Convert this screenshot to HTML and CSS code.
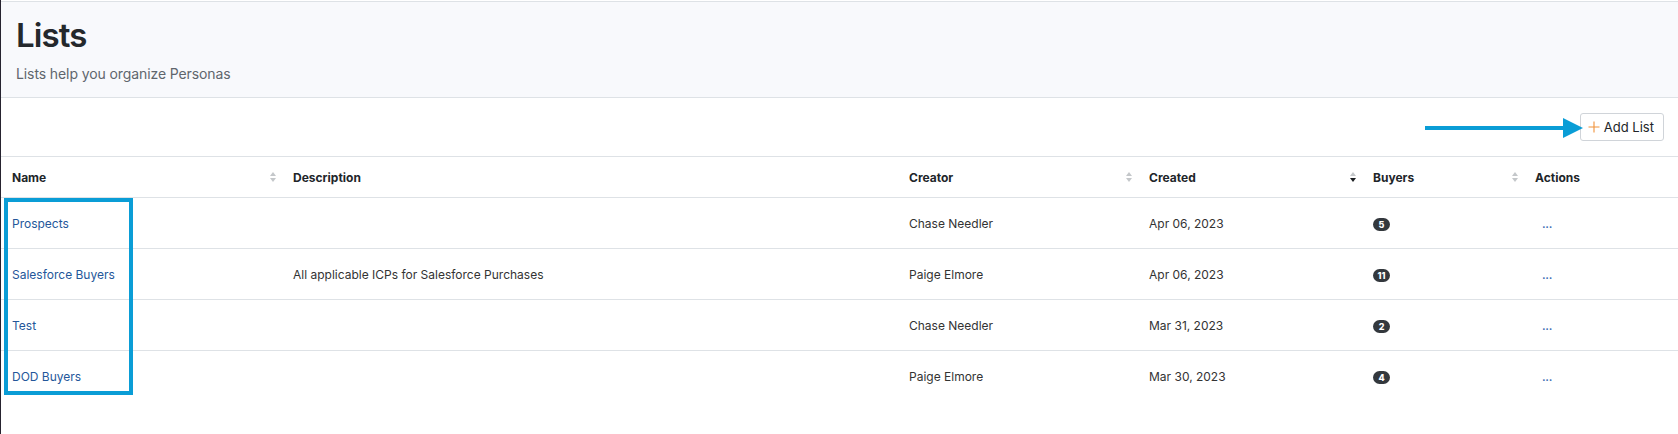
FILE: index.html
```html
<!DOCTYPE html>
<html lang="en">
<head>
    <meta charset="UTF-8">
    <meta name="viewport" content="width=device-width, initial-scale=1.0">
    <title>Lists</title>

    <link rel="stylesheet" href="styles.css">
</head>
<body>
    <div class="page">
        <header class="pageHeader">
            <h1>Lists</h1>
            <p>Lists help you organize Personas</p>
        </header>

        <div class="toolbar">
            <div class="arrow">
                <span class="arrowLine"></span>
                <span class="arrowHead"></span>
            </div>
            <button class="addBtn">
                <svg class="plus" width="12" height="12" viewBox="0 0 12 12">
                    <path d="M6 0.5V11.5M0.5 6H11.5" stroke="#f0923a" stroke-width="1.1" fill="none"/>
                </svg>
                Add List
            </button>
        </div>

        <div class="tableWrap">
            <table class="listTable">
                <colgroup>
                    <col class="colName">
                    <col class="colDesc">
                    <col class="colCreator">
                    <col class="colCreated">
                    <col class="colBuyers">
                    <col>
                </colgroup>
                <thead>
                    <tr>
                        <th>Name <span class="sort"></span></th>
                        <th>Description</th>
                        <th>Creator <span class="sort"></span></th>
                        <th>Created <span class="sort desc"></span></th>
                        <th>Buyers <span class="sort"></span></th>
                        <th>Actions</th>
                    </tr>
                </thead>
                <tbody>
                    <tr>
                        <td><a href="#">Prospects</a></td>
                        <td></td>
                        <td>Chase Needler</td>
                        <td>Apr 06, 2023</td>
                        <td><span class="badge">5</span></td>
                        <td><a href="#" class="dots">...</a></td>
                    </tr>
                    <tr>
                        <td><a href="#">Salesforce Buyers</a></td>
                        <td>All applicable ICPs for Salesforce Purchases</td>
                        <td>Paige Elmore</td>
                        <td>Apr 06, 2023</td>
                        <td><span class="badge">11</span></td>
                        <td><a href="#" class="dots">...</a></td>
                    </tr>
                    <tr>
                        <td><a href="#">Test</a></td>
                        <td></td>
                        <td>Chase Needler</td>
                        <td>Mar 31, 2023</td>
                        <td><span class="badge">2</span></td>
                        <td><a href="#" class="dots">...</a></td>
                    </tr>
                    <tr>
                        <td><a href="#">DOD Buyers</a></td>
                        <td></td>
                        <td>Paige Elmore</td>
                        <td>Mar 30, 2023</td>
                        <td><span class="badge">4</span></td>
                        <td><a href="#" class="dots">...</a></td>
                    </tr>
                </tbody>
            </table>
            <div class="highlight"></div>
        </div>
    </div>
</body>
</html>
```

FILE: styles.css
```css
body{
    margin: 0;
    font-family: Inter, "Liberation Sans", sans-serif;
    color: #212529;
    background: #fff;
}

.page{
    min-height: 434px;
    border-left: 1px solid #26232f;
    padding-top: 1px;
}

.pageHeader{
    background-color: #f8f9fc;
    border-top: 1px solid #dee2e6;
    border-bottom: 1px solid #dee2e6;
    padding: 13px 16px 0 15px;
    height: 82px;
}

.pageHeader h1{
    margin: 0;
    font-size: 33px;
    font-weight: 600;
    line-height: 40px;
    letter-spacing: -0.9px;
    color: #24282c;
}

.pageHeader p{
    margin: 10px 0 0;
    font-size: 14px;
    letter-spacing: -0.1px;
    color: #5f666d;
}

.toolbar{
    display: flex;
    justify-content: flex-end;
    align-items: center;
    height: 58px;
    padding-right: 14px;
    border-bottom: 1px solid #dee2e6;
    position: relative;
}

.addBtn{
    display: flex;
    align-items: center;
    gap: 4px;
    height: 28px;
    padding: 0 9px 0 7px;
    background: #fff;
    border: 1px solid #d0d4d9;
    border-radius: 3px;
    font-family: inherit;
    font-size: 13px;
    color: #212529;
}

.arrow{
    position: absolute;
    left: 1424px;
    top: 20px;
    width: 158px;
    height: 20px;
}

.arrowLine{
    position: absolute;
    left: 0;
    top: 8px;
    width: 142px;
    height: 4px;
    background: #0a9dd6;
}

.arrowHead{
    position: absolute;
    right: 0;
    top: 0;
    border-left: 20px solid #0a9dd6;
    border-top: 10px solid transparent;
    border-bottom: 10px solid transparent;
}

.tableWrap{
    position: relative;
}

.listTable{
    width: 100%;
    border-collapse: collapse;
    table-layout: fixed;
    font-size: 12px;
}

.colName{ width: 283px; }
.colDesc{ width: 616px; }
.colCreator{ width: 240px; }
.colCreated{ width: 224px; }
.colBuyers{ width: 162px; }

.listTable th{
    position: relative;
    text-align: left;
    font-weight: 700;
    height: 40px;
    padding: 0 8px 0 9px;
    border-bottom: 1px solid #dee2e6;
    color: #212529;
}

.listTable td{
    height: 50px;
    padding: 0 8px 0 9px;
    border-bottom: 1px solid #dee2e6;
    color: #333;
}

.listTable th:first-child,
.listTable td:first-child{
    padding-left: 11px;
}

.listTable tbody tr:last-child td{
    border-bottom: none;
}

.listTable a{
    color: #24579a;
    text-decoration: none;
}

.sort{
    position: absolute;
    right: 8px;
    top: 15px;
    width: 6px;
    height: 10px;
}

.sort::before,
.sort::after{
    content: "";
    position: absolute;
    left: 0;
    border-left: 3px solid transparent;
    border-right: 3px solid transparent;
}

.sort::before{
    top: 0;
    border-bottom: 4px solid #c4c7ca;
}

.sort::after{
    bottom: 0;
    border-top: 4px solid #c4c7ca;
}

.sort.desc::after{
    border-top-color: #1b1e21;
}

.badge{
    display: inline-block;
    min-width: 17px;
    height: 13px;
    padding: 0 4px;
    box-sizing: border-box;
    border-radius: 7px;
    background: #33383d;
    color: #fff;
    font-size: 9px;
    font-weight: 800;
    line-height: 13px;
    text-align: center;
    vertical-align: middle;
}

.listTable a.dots{
    color: #3a6bb3;
    font-size: 12px;
    font-weight: 500;
    letter-spacing: -0.3px;
    margin-left: 7px;
}

.highlight{
    position: absolute;
    left: 3px;
    top: 41px;
    width: 121px;
    height: 189px;
    border: 4px solid #0a9dd6;
}
```
